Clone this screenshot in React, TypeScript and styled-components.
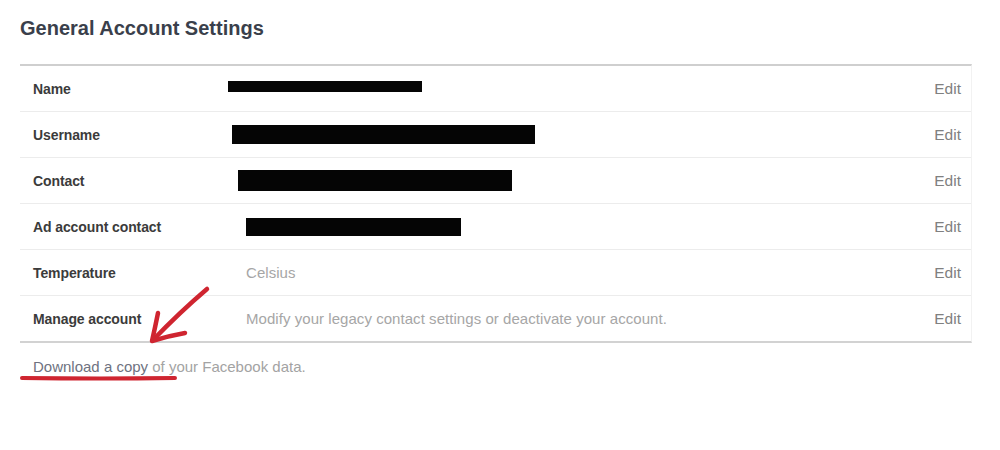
import React from "react";
import styled, { createGlobalStyle } from "styled-components";

const GlobalStyle = createGlobalStyle`
  html, body {
    margin: 0;
    padding: 0;
    background: #ffffff;
    font-family: "Liberation Sans", Arial, sans-serif;
  }
`;

const Page = styled.div`
  position: relative;
  width: 1000px;
  height: 450px;
  box-sizing: border-box;
  padding: 16px 28px 0 20px;
  background: #ffffff;
`;

const Title = styled.h2`
  margin: 0 0 24px 0;
  font-size: 20px;
  line-height: 24px;
  font-weight: bold;
  color: #3a3f4b;
`;

const Table = styled.div`
  display: flex;
  flex-direction: column;
  border-top: 2px solid #cfcfcf;
  border-bottom: 2px solid #d2d2d2;
  border-right: 1px solid #f2f2f2;
`;

const Row = styled.div`
  display: grid;
  grid-template-columns: 213px 1fr auto;
  align-items: center;
  height: 45px;
  padding: 0 10px 0 13px;
  border-bottom: 1px solid #ececec;

  &:last-child {
    border-bottom: none;
  }
`;

const Label = styled.span`
  font-size: 14px;
  font-weight: bold;
  color: #3b3b3b;
  letter-spacing: -0.1px;
`;

const Value = styled.span`
  display: flex;
  align-items: center;
  font-size: 15px;
  color: #a6a6a6;
  letter-spacing: 0.05px;
`;

const Redaction = styled.span<{ $w: number; $h: number; $shift: number; $dy?: number }>`
  display: inline-block;
  width: ${(p) => p.$w}px;
  height: ${(p) => p.$h}px;
  margin-left: ${(p) => p.$shift}px;
  transform: translateY(${(p) => p.$dy ?? 0}px);
  background: #050505;
`;

const EditLink = styled.a`
  font-size: 15.5px;
  color: #808080;
  text-decoration: none;
  cursor: pointer;
`;

const Footer = styled.p`
  margin: 0;
  padding: 15px 0 0 13px;
  font-size: 15px;
  line-height: 17px;
  color: #a3a3a3;
`;

const FooterLink = styled.a`
  color: #6e7280;
  text-decoration: none;
`;

const Annotation = styled.svg`
  position: absolute;
  left: 0;
  top: 0;
  pointer-events: none;
`;

type RowData = {
  label: string;
  text?: string;
  bar?: { w: number; h: number; shift: number; dy?: number };
};

const rows: RowData[] = [
  { label: "Name", bar: { w: 194, h: 11, shift: -18, dy: -2 } },
  { label: "Username", bar: { w: 303, h: 19, shift: -14 } },
  { label: "Contact", bar: { w: 274, h: 21, shift: -8 } },
  { label: "Ad account contact", bar: { w: 215, h: 18, shift: 0 } },
  { label: "Temperature", text: "Celsius" },
  {
    label: "Manage account",
    text: "Modify your legacy contact settings or deactivate your account.",
  },
];

export default function App() {
  return (
    <>
      <GlobalStyle />
      <Page>
        <Title>General Account Settings</Title>
        <Table>
          {rows.map((r) => (
            <Row key={r.label}>
              <Label>{r.label}</Label>
              <Value>
                {r.bar ? (
                  <Redaction
                    $w={r.bar.w}
                    $h={r.bar.h}
                    $shift={r.bar.shift}
                    $dy={r.bar.dy}
                  />
                ) : (
                  r.text
                )}
              </Value>
              <EditLink>Edit</EditLink>
            </Row>
          ))}
        </Table>
        <Footer>
          <FooterLink>Download a copy</FooterLink> of your Facebook data.
        </Footer>
        <Annotation width="1000" height="450" viewBox="0 0 1000 450">
          <g
            stroke="#cf2530"
            strokeLinecap="round"
            strokeLinejoin="round"
            fill="none"
          >
            <path d="M207 289 Q180 312 153 340" strokeWidth="4.5" />
            <path d="M158 313 Q155 328 152 341 Q168 336 185 333" strokeWidth="4.5" />
            <path d="M22 378 Q100 379 175 378" strokeWidth="4" />
          </g>
        </Annotation>
      </Page>
    </>
  );
}
